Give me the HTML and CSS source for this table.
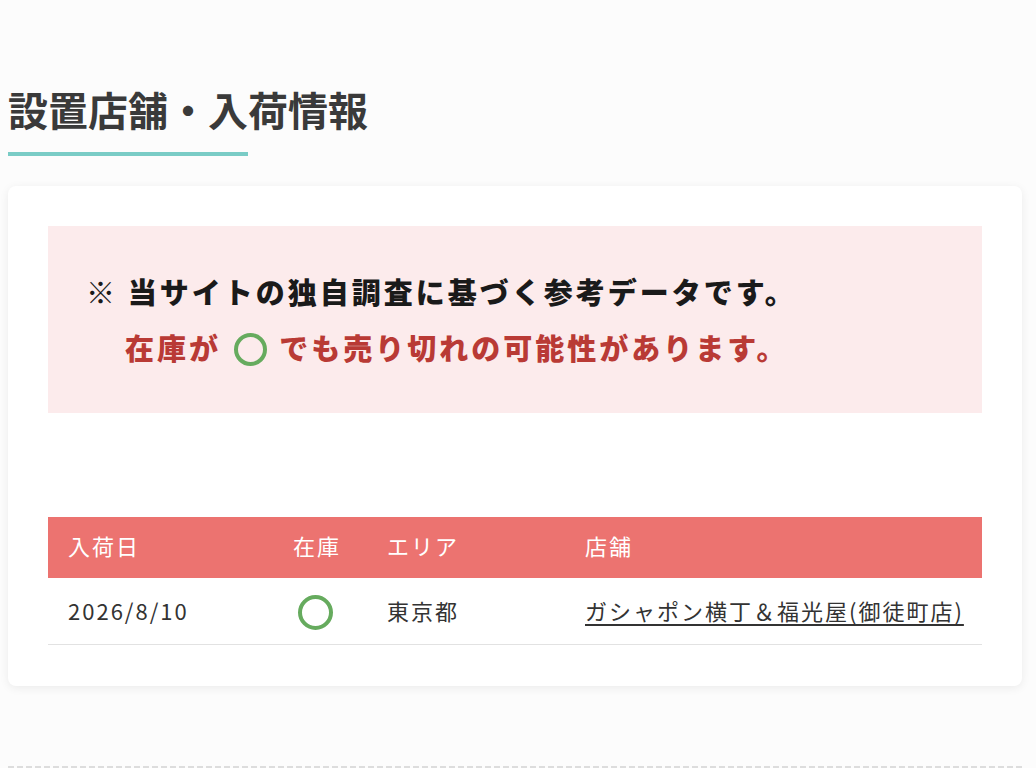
FILE: index.html
```html
<!DOCTYPE html>
<html lang="ja">
<head>
<meta charset="utf-8">
<title>設置店舗・入荷情報</title>
<link rel="stylesheet" href="styles.css">
</head>
<body>
<main class="page">
  <h2 class="section-title">設置店舗・入荷情報</h2>
  <section class="card">
    <div class="notice">
      <p class="notice-main">※ 当サイトの独自調査に基づく参考データです。</p>
      <p class="notice-sub">在庫が <span class="maru maru-lg"></span> でも売り切れの可能性があります。</p>
    </div>
    <table class="stock-table">
      <colgroup>
        <col class="c-date">
        <col class="c-stock">
        <col class="c-area">
        <col class="c-shop">
      </colgroup>
      <thead>
        <tr>
          <th>入荷日</th>
          <th>在庫</th>
          <th>エリア</th>
          <th>店舗</th>
        </tr>
      </thead>
      <tbody>
        <tr>
          <td>2026/8/10</td>
          <td><span class="maru maru-sm"></span></td>
          <td>東京都</td>
          <td class="shop"><a class="shop-link" href="#">ガシャポン横丁＆福光屋(御徒町店)</a></td>
        </tr>
      </tbody>
    </table>
  </section>
  <div class="divider"></div>
</main>
</body>
</html>
```

FILE: styles.css
```css
* { box-sizing: border-box; }

html, body {
  margin: 0;
  padding: 0;
  background: #fcfcfc;
}

body {
  font-family: "Noto Sans CJK JP", "Noto Sans", sans-serif;
  color: #333;
}

.page {
  width: 1014px;
  margin-left: 8px;
  padding-top: 79px;
}

.section-title {
  margin: 0 0 34px;
  font-size: 40px;
  line-height: 60px;
  font-weight: 700;
  color: #3a3a3a;
  padding-bottom: 13px;
  position: relative;
}

.section-title::after {
  content: "";
  display: block;
  width: 240px;
  height: 4px;
  background: #7accc6;
  position: absolute;
  left: 0;
  bottom: -4px;
}

.card {
  background: #fff;
  border-radius: 8px;
  box-shadow: 0 2px 10px rgba(0, 0, 0, 0.07);
  padding: 40px 40px 41px;
}

.notice {
  background: #fcebec;
  padding: 37px 40px 38px 38px;
}

.notice p {
  margin: 0;
  font-size: 29px;
  line-height: 56px;
  font-weight: 900;
  letter-spacing: 3px;
  white-space: nowrap;
}

.notice-main {
  color: #1a1a1a;
}

.notice-sub {
  color: #b93a35;
  padding-left: 39px;
}

.maru {
  display: inline-block;
  border-radius: 50%;
  border-style: solid;
  border-color: #66ab5e;
  vertical-align: middle;
}

.maru-lg {
  width: 33px;
  height: 33px;
  border-width: 4.5px;
  margin: -6px 3px 0 3px;
}

.maru-sm {
  width: 35px;
  height: 35px;
  border-width: 4.5px;
  margin-left: 5px;
}

.stock-table {
  width: 100%;
  margin-top: 104px;
  border-collapse: collapse;
  table-layout: fixed;
  font-size: 22px;
  letter-spacing: 2px;
}

.c-date { width: 225px; }
.c-stock { width: 94px; }
.c-area { width: 198px; }
.c-shop { width: auto; }

.stock-table th {
  background: #ec7370;
  color: #fff;
  font-weight: 400;
  text-align: left;
  padding: 12px 20px 16px;
  line-height: 33px;
}

.stock-table td {
  height: 66px;
  padding: 0 20px;
  line-height: 33px;
  border-bottom: 1px solid #e2e2e2;
  color: #333;
  vertical-align: middle;
}

.stock-table td.shop {
  white-space: nowrap;
  padding-right: 0;
}

.shop-link {
  color: #333;
  text-decoration: underline;
  text-decoration-thickness: 2px;
  text-underline-offset: 4px;
}

.divider {
  margin-top: 80px;
  height: 3px;
  background: repeating-linear-gradient(to right, #dddddd 0 6px, transparent 6px 9px);
}
```
